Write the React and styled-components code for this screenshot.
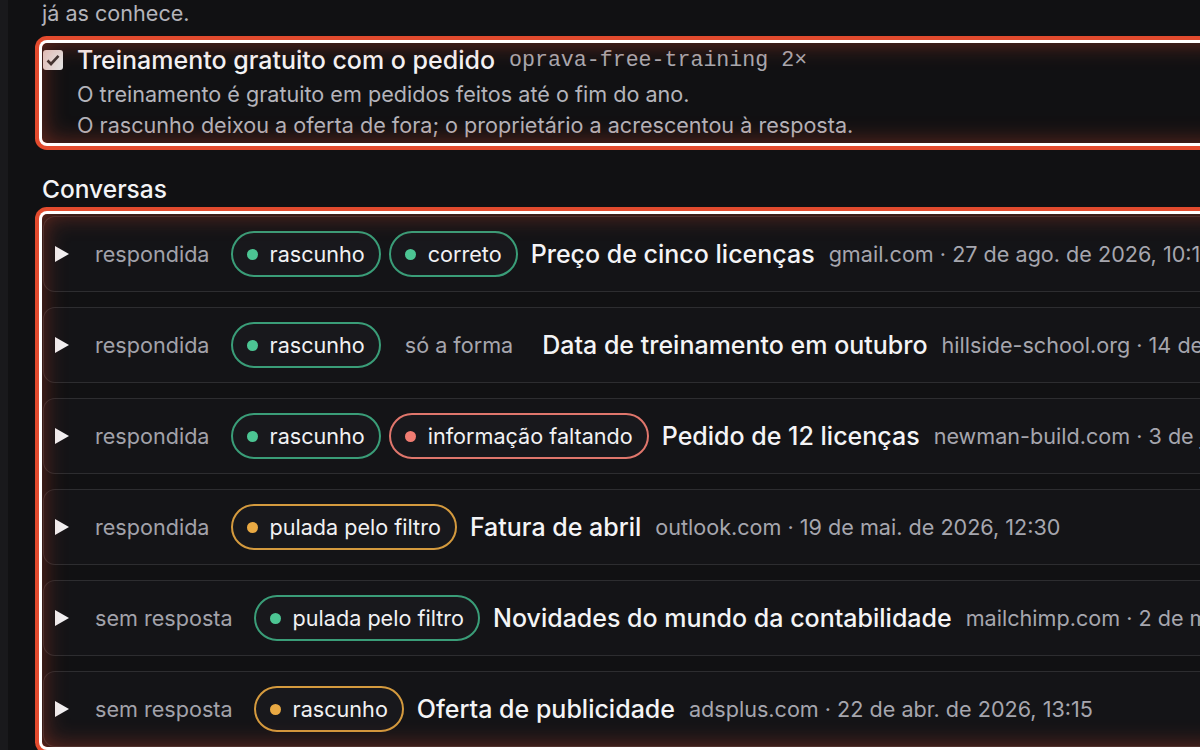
import styled, { createGlobalStyle } from "styled-components";

// cores das etiquetas
const TONES = {
  green: { border: "#3a9d78", dot: "#4cc593" },
  red: { border: "#e0766c", dot: "#f07c72" },
  amber: { border: "#d49a3e", dot: "#e9a943" },
};

const CONVERSAS = [
  {
    status: "respondida",
    tags: [
      { tone: "green", label: "rascunho" },
      { tone: "green", label: "correto" },
    ],
    title: "Preço de cinco licenças",
    meta: "gmail.com · 27 de ago. de 2026, 10:15",
  },
  {
    status: "respondida",
    tags: [{ tone: "green", label: "rascunho" }, { plain: true, label: "só a forma" }],
    title: "Data de treinamento em outubro",
    meta: "hillside-school.org · 14 de set. de 2026, 09:40",
  },
  {
    status: "respondida",
    tags: [
      { tone: "green", label: "rascunho" },
      { tone: "red", label: "informação faltando" },
    ],
    title: "Pedido de 12 licenças",
    meta: "newman-build.com · 3 de jun. de 2026, 16:05",
  },
  {
    status: "respondida",
    tags: [{ tone: "amber", label: "pulada pelo filtro" }],
    title: "Fatura de abril",
    meta: "outlook.com · 19 de mai. de 2026, 12:30",
  },
  {
    status: "sem resposta",
    tags: [{ tone: "green", label: "pulada pelo filtro" }],
    title: "Novidades do mundo da contabilidade",
    meta: "mailchimp.com · 2 de mai. de 2026, 08:00",
  },
  {
    status: "sem resposta",
    tags: [{ tone: "amber", label: "rascunho" }],
    title: "Oferta de publicidade",
    meta: "adsplus.com · 22 de abr. de 2026, 13:15",
  },
];

const App = () => {
  return (
    <>
      <GlobalStyle />
      <S.Main>
        <S.Intro>já as conhece.</S.Intro>

        <S.Highlight>
          <S.FactHead>
            <S.Check>
              <svg width="14" height="12" viewBox="0 0 14 12">
                <path d="M1.5 6.5 L5 10 L12.5 1.8" fill="none" stroke="#333" strokeWidth="2.6" />
              </svg>
            </S.Check>
            <S.FactTitle>Treinamento gratuito com o pedido</S.FactTitle>
            <S.Code>oprava-free-training</S.Code>
            <S.Count>2×</S.Count>
          </S.FactHead>
          <S.FactText>O treinamento é gratuito em pedidos feitos até o fim do ano.</S.FactText>
          <S.FactText>
            O rascunho deixou a oferta de fora; o proprietário a acrescentou à resposta.
          </S.FactText>
        </S.Highlight>

        <S.Heading>Conversas</S.Heading>

        <S.Highlight $list>
          {CONVERSAS.map((c) => (
            <S.Row key={c.title}>
              <S.Caret>
                <svg width="14" height="16" viewBox="0 0 14 16">
                  <polygon points="0,0 14,8 0,16" fill="#f2f2f4" />
                </svg>
              </S.Caret>
              <S.Status>{c.status}</S.Status>
              <S.Tags>
                {c.tags.map((t) =>
                  t.plain ? (
                    <S.Pill key={t.label} $plain>
                      {t.label}
                    </S.Pill>
                  ) : (
                    <S.Pill key={t.label} $border={TONES[t.tone].border}>
                      <S.Dot $color={TONES[t.tone].dot} />
                      {t.label}
                    </S.Pill>
                  )
                )}
              </S.Tags>
              <S.Title>{c.title}</S.Title>
              <S.Meta>{c.meta}</S.Meta>
            </S.Row>
          ))}
        </S.Highlight>
      </S.Main>
    </>
  );
};
export default App;

const GlobalStyle = createGlobalStyle`
  html, body {
    margin: 0;
    background: #19191c;
    overflow: hidden;
  }
  body {
    font-family: Inter, "Noto Sans", sans-serif;
    color: #f1f1f3;
    -webkit-font-smoothing: antialiased;
  }
`;

const Main = styled.main`
  margin-left: 8px;
  width: 1500px;
  min-height: 750px;
  background: #111113;
  padding-left: 34px;
  box-sizing: border-box;
`;

const Intro = styled.p`
  margin: 0;
  font-size: 21.6px;
  line-height: 26px;
  color: #b4b4bb;
`;

const Highlight = styled.section`
  position: relative;
  margin-top: ${(p) => (p.$list ? "0" : "17px")};
  border-radius: 5px;
  box-shadow: 0 0 0 3px #ffffff, 0 0 0 7px #e34b2e;
  padding: ${(p) => (p.$list ? "2px 0 0 1px" : "1px 0 0")};
  height: ${(p) => (p.$list ? "auto" : "100px")};
  box-sizing: border-box;
  display: flex;
  flex-direction: column;
  gap: ${(p) => (p.$list ? "15px" : "0")};

  &::after {
    content: "";
    position: absolute;
    inset: 0;
    border-radius: 5px;
    pointer-events: none;
    box-shadow: inset 0 0 24px rgba(215, 70, 45, 0.45);
  }
`;

const FactHead = styled.div`
  display: flex;
  align-items: center;
  height: 32px;
  margin-bottom: 3px;
  padding-left: 1px;
`;

const Check = styled.span`
  width: 20px;
  height: 20px;
  border-radius: 3px;
  background: #e4e4e4;
  display: flex;
  align-items: center;
  justify-content: center;
  margin-right: 14px;
  flex: none;
`;

const FactTitle = styled.span`
  font-size: 25px;
  font-weight: 500;
  color: #f4f4f6;
  margin-right: 14px;
  white-space: nowrap;
`;

const Code = styled.code`
  font-family: "Liberation Mono", "DejaVu Sans Mono", monospace;
  font-size: 21.6px;
  color: #a9a9b0;
  margin-right: 13px;
`;

const Count = styled.span`
  font-family: "Liberation Mono", "DejaVu Sans Mono", monospace;
  font-size: 21.6px;
  color: #a9a9b0;
`;

const FactText = styled.p`
  margin: 0;
  padding-left: 35px;
  font-size: 21.6px;
  line-height: 31px;
  color: #b4b4bb;
  white-space: nowrap;
`;

const Heading = styled.h2`
  margin: 31px 0 10px;
  font-size: 24.5px;
  font-weight: 500;
  line-height: 30px;
  color: #f4f4f6;
`;

const Row = styled.div`
  height: 76px;
  box-sizing: border-box;
  border: 1px solid rgba(255, 255, 255, 0.11);
  border-radius: 12px;
  background: #141417;
  display: flex;
  align-items: center;
  padding-left: 11px;
  white-space: nowrap;
`;

const Caret = styled.span`
  display: flex;
  margin-right: 26px;
`;

const Status = styled.span`
  font-size: 21.6px;
  color: #a2a2aa;
  margin-right: 21px;
`;

const Tags = styled.div`
  display: flex;
  gap: 8px;
  margin-right: 13px;
`;

const Pill = styled.span`
  height: 46px;
  box-sizing: border-box;
  display: inline-flex;
  align-items: center;
  gap: 12px;
  padding: 0 14px;
  border-radius: 23px;
  border: 2px solid ${(p) => (p.$plain ? "transparent" : p.$border)};
  background: ${(p) => (p.$plain ? "transparent" : "#18181c")};
  font-size: 21.6px;
  color: ${(p) => (p.$plain ? "#a6a6ae" : "#f1f1f3")};
`;

const Dot = styled.span`
  width: 11px;
  height: 11px;
  border-radius: 50%;
  background: ${(p) => p.$color};
`;

const Title = styled.span`
  font-size: 25px;
  font-weight: 500;
  color: #f4f4f6;
  margin-right: 14px;
`;

const Meta = styled.span`
  font-size: 21.6px;
  color: #a6a6ae;
`;

const S = {
  Main,
  Intro,
  Highlight,
  FactHead,
  Check,
  FactTitle,
  Code,
  Count,
  FactText,
  Heading,
  Row,
  Caret,
  Status,
  Tags,
  Pill,
  Dot,
  Title,
  Meta,
};
